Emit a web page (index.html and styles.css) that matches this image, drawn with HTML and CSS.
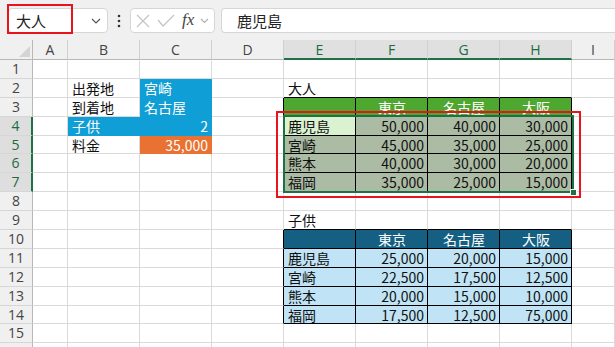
FILE: index.html
```html
<!DOCTYPE html>
<html lang="ja">
<head>
    <meta charset="UTF-8">
    <meta name="viewport" content="width=device-width, initial-scale=1.0">
    <title>Book1</title>
    <link rel="stylesheet" href="styles.css">
</head>
<body>
    <div class="toolbar">
        <div class="namebox">
            <span>大人</span>
            <svg class="chev" width="10" height="6" viewBox="0 0 10 6"><path d="M1 1 L5 5 L9 1" fill="none" stroke="#555" stroke-width="1.2"/></svg>
        </div>
        <div class="more">
            <svg width="4" height="14" viewBox="0 0 4 14"><circle cx="2" cy="2" r="1.3" fill="#333"/><circle cx="2" cy="7" r="1.3" fill="#333"/><circle cx="2" cy="12" r="1.3" fill="#333"/></svg>
        </div>
        <div class="fxgroup">
            <svg width="14" height="14" viewBox="0 0 14 14"><path d="M1 1 L13 13 M13 1 L1 13" stroke="#c4c4c4" stroke-width="1.2"/></svg>
            <svg width="18" height="14" viewBox="0 0 18 14"><path d="M1 6 L6 12 L17 1" fill="none" stroke="#c4c4c4" stroke-width="1.2"/></svg>
            <i class="fx">fx</i>
            <svg width="9" height="6" viewBox="0 0 9 6"><path d="M1 1 L4.5 4.5 L8 1" fill="none" stroke="#b0b0b0" stroke-width="1.2"/></svg>
        </div>
        <div class="formula">鹿児島</div>
        <div class="mark-name"></div>
    </div>

    <div class="sheet">
        <!-- column headers -->
        <div class="corner"><span class="tri"></span></div>
        <div class="hd">A</div><div class="hd">B</div><div class="hd">C</div><div class="hd">D</div>
        <div class="hd on">E</div><div class="hd on">F</div><div class="hd on">G</div><div class="hd on">H</div>
        <div class="hd">I</div>

        <!-- 1 -->
        <div class="rh">1</div>
        <div class="c"></div><div class="c"></div><div class="c"></div><div class="c"></div>
        <div class="c"></div><div class="c"></div><div class="c"></div><div class="c"></div><div class="c"></div>

        <!-- 2 -->
        <div class="rh">2</div>
        <div class="c"></div><div class="c">出発地</div><div class="c blue">宮崎</div><div class="c"></div>
        <div class="c bb">大人</div><div class="c bb"></div><div class="c bb"></div><div class="c bb"></div><div class="c"></div>

        <!-- 3 -->
        <div class="rh">3</div>
        <div class="c"></div><div class="c">到着地</div><div class="c blue">名古屋</div><div class="c br"></div>
        <div class="c tb green"></div><div class="c tb green ctr">東京</div><div class="c tb green ctr">名古屋</div><div class="c tb green ctr">大阪</div><div class="c"></div>

        <!-- 4 -->
        <div class="rh on">4</div>
        <div class="c"></div><div class="c blue">子供</div><div class="c blue r">2</div><div class="c br"></div>
        <div class="c tb active">鹿児島</div><div class="c tb sel r">50,000</div><div class="c tb sel r">40,000</div><div class="c tb sel r">30,000</div><div class="c"></div>

        <!-- 5 -->
        <div class="rh on">5</div>
        <div class="c"></div><div class="c">料金</div><div class="c orange r">35,000</div><div class="c br"></div>
        <div class="c tb sel">宮崎</div><div class="c tb sel r">45,000</div><div class="c tb sel r">35,000</div><div class="c tb sel r">25,000</div><div class="c"></div>

        <!-- 6 -->
        <div class="rh on">6</div>
        <div class="c"></div><div class="c"></div><div class="c"></div><div class="c br"></div>
        <div class="c tb sel">熊本</div><div class="c tb sel r">40,000</div><div class="c tb sel r">30,000</div><div class="c tb sel r">20,000</div><div class="c"></div>

        <!-- 7 -->
        <div class="rh on">7</div>
        <div class="c"></div><div class="c"></div><div class="c"></div><div class="c br"></div>
        <div class="c tb sel">福岡</div><div class="c tb sel r">35,000</div><div class="c tb sel r">25,000</div><div class="c tb sel r">15,000</div><div class="c"></div>

        <!-- 8 -->
        <div class="rh">8</div>
        <div class="c"></div><div class="c"></div><div class="c"></div><div class="c"></div>
        <div class="c"></div><div class="c"></div><div class="c"></div><div class="c"></div><div class="c"></div>

        <!-- 9 -->
        <div class="rh">9</div>
        <div class="c"></div><div class="c"></div><div class="c"></div><div class="c"></div>
        <div class="c bb">子供</div><div class="c bb"></div><div class="c bb"></div><div class="c bb"></div><div class="c"></div>

        <!-- 10 -->
        <div class="rh">10</div>
        <div class="c"></div><div class="c"></div><div class="c"></div><div class="c br"></div>
        <div class="c tb navy"></div><div class="c tb navy ctr">東京</div><div class="c tb navy ctr">名古屋</div><div class="c tb navy ctr">大阪</div><div class="c"></div>

        <!-- 11 -->
        <div class="rh">11</div>
        <div class="c"></div><div class="c"></div><div class="c"></div><div class="c br"></div>
        <div class="c tb sky">鹿児島</div><div class="c tb sky r">25,000</div><div class="c tb sky r">20,000</div><div class="c tb sky r">15,000</div><div class="c"></div>

        <!-- 12 -->
        <div class="rh">12</div>
        <div class="c"></div><div class="c"></div><div class="c"></div><div class="c br"></div>
        <div class="c tb sky">宮崎</div><div class="c tb sky r">22,500</div><div class="c tb sky r">17,500</div><div class="c tb sky r">12,500</div><div class="c"></div>

        <!-- 13 -->
        <div class="rh">13</div>
        <div class="c"></div><div class="c"></div><div class="c"></div><div class="c br"></div>
        <div class="c tb sky">熊本</div><div class="c tb sky r">20,000</div><div class="c tb sky r">15,000</div><div class="c tb sky r">10,000</div><div class="c"></div>

        <!-- 14 -->
        <div class="rh">14</div>
        <div class="c"></div><div class="c"></div><div class="c"></div><div class="c br"></div>
        <div class="c tb sky">福岡</div><div class="c tb sky r">17,500</div><div class="c tb sky r">12,500</div><div class="c tb sky r">75,000</div><div class="c"></div>

        <!-- 15 -->
        <div class="rh">15</div>
        <div class="c"></div><div class="c"></div><div class="c"></div><div class="c"></div>
        <div class="c"></div><div class="c"></div><div class="c"></div><div class="c"></div><div class="c"></div>

        <!-- 16 (only its top edge shows) -->
        <div class="rh"></div>
        <div class="c"></div><div class="c"></div><div class="c"></div><div class="c"></div>
        <div class="c"></div><div class="c"></div><div class="c"></div><div class="c"></div><div class="c"></div>

        <div class="selection"><span class="handle"></span></div>
        <div class="mark-range"></div>
    </div>
</body>
</html>
```

FILE: styles.css
```css
body{
    margin: 0;
    width: 615px;
    height: 347px;
    overflow: hidden;
    background-color: #ffffff;
    font-family: "Noto Sans CJK JP", "Noto Sans", sans-serif;
}
.toolbar{
    position: relative;
    height: 40px;
    box-sizing: border-box;
    padding: 8px 0 0 8px;
    display: flex;
    align-items: flex-start;
    background-color: #f0f0f0;
}
.namebox{
    width: 100px;
    height: 25px;
    box-sizing: border-box;
    border: 1px solid #d6d6d6;
    border-radius: 4px;
    background-color: #ffffff;
    display: flex;
    align-items: center;
    justify-content: space-between;
    padding: 0 6px 0 7px;
    font-size: 15px;
    color: #222222;
}
.more{
    width: 22px;
    height: 25px;
    display: flex;
    align-items: center;
    justify-content: center;
}
.fxgroup{
    width: 85px;
    height: 25px;
    box-sizing: border-box;
    border: 1px solid #d6d6d6;
    border-radius: 4px;
    background-color: #ffffff;
    display: flex;
    align-items: center;
    gap: 7px;
    padding-left: 5px;
}
.fx{
    font: italic 17px "Liberation Serif", serif;
    color: #444444;
    margin: -2px -1px 0 0;
}
.formula{
    flex: 1;
    height: 25px;
    margin-left: 6px;
    box-sizing: border-box;
    border: 1px solid #d6d6d6;
    border-right: none;
    border-radius: 4px 0 0 4px;
    background-color: #ffffff;
    padding-left: 15px;
    font-size: 15px;
    line-height: 23px;
    color: #222222;
}
.mark-name{
    position: absolute;
    left: 7px;
    top: 4px;
    width: 66px;
    height: 30px;
    box-sizing: border-box;
    border: 2px solid #e8141c;
}

.sheet{
    position: relative;
    display: grid;
    grid-template-columns: 33px 35px repeat(7, 72px) 1fr;
    grid-template-rows: 20px;
    grid-auto-rows: 18.9px;
    font-size: 14px;
    color: #111111;
}
.corner, .hd{
    background-color: #f0f0f0;
    border-right: 1px solid #d0d0d0;
    border-bottom: 1px solid #b8b8b8;
    box-sizing: border-box;
}
.corner{
    position: relative;
    border-right-color: #b8b8b8;
}
.tri{
    position: absolute;
    right: 2px;
    bottom: 2px;
    border-left: 11px solid transparent;
    border-bottom: 11px solid #d4d4d4;
}
.hd{
    text-align: center;
    font: 14px "Open Sans", sans-serif;
    line-height: 20px;
    color: #444444;
}
.hd.on{
    background-color: #e0e0e0;
    color: #1d6b40;
    border-bottom: 2px solid #1e7145;
}
.rh{
    background-color: #f0f0f0;
    border-right: 1px solid #b8b8b8;
    border-bottom: 1px solid #d6d6d6;
    box-sizing: border-box;
    text-align: center;
    font: 14px "Open Sans", sans-serif;
    line-height: 18px;
    color: #444444;
}
.rh.on{
    background-color: #dedede;
    color: #1d6b40;
    border-right: 2px solid #1e7145;
}
.c{
    border-right: 1px solid #dadada;
    border-bottom: 1px solid #dadada;
    box-sizing: border-box;
    padding: 0 3px 0 4px;
    line-height: 18px;
    white-space: nowrap;
    overflow: hidden;
}
.r{
    text-align: right;
}
.ctr{
    text-align: center;
}
.br{
    border-right-color: #000000;
}
.bb{
    border-bottom-color: #000000;
}
.tb{
    border-right-color: #000000;
    border-bottom-color: #000000;
}
.blue{
    background-color: #0f9ed5;
    border-color: #0f9ed5;
    color: #ffffff;
}
.orange{
    background-color: #e97132;
    border-color: #e97132;
    color: #ffffff;
}
.green{
    background-color: #4ea72e;
    color: #ffffff;
}
.navy{
    background-color: #156082;
    color: #ffffff;
}
.sky{
    background-color: #c0e4f5;
}
.active{
    background-color: #daf2d0;
}
.sel{
    background-color: #abbba4;
}
.selection{
    position: absolute;
    left: 283px;
    top: 75px;
    width: 291px;
    height: 78px;
    box-sizing: border-box;
    border: 2px solid #1e7145;
}
.handle{
    position: absolute;
    right: -5px;
    bottom: -5px;
    width: 5px;
    height: 5px;
    background-color: #1e7145;
    border: 1px solid #ffffff;
}
.mark-range{
    position: absolute;
    left: 276px;
    top: 71px;
    width: 305px;
    height: 87px;
    box-sizing: border-box;
    border: 2px solid #e8141c;
}
```
